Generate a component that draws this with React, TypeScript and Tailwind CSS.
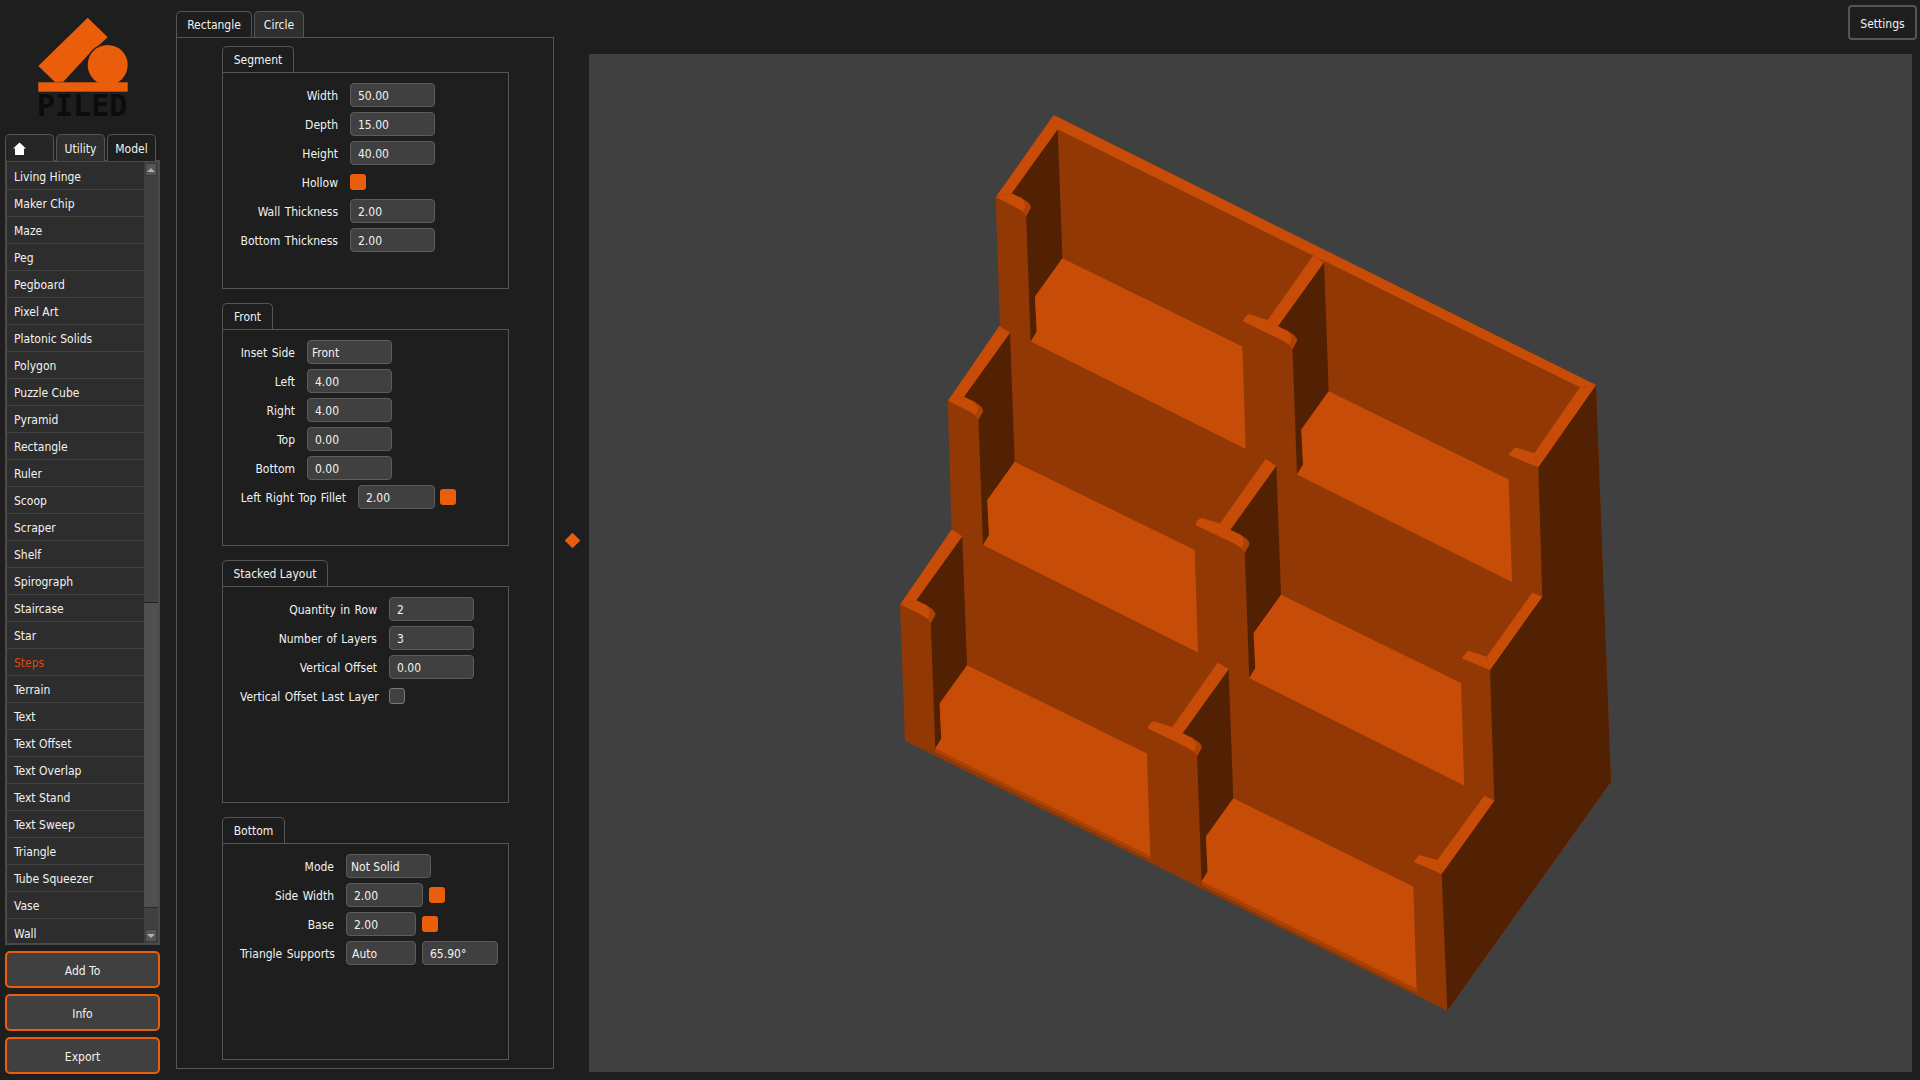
import type { ReactNode } from "react";

const modelItems = [
  "Living Hinge", "Maker Chip", "Maze", "Peg", "Pegboard", "Pixel Art", "Platonic Solids", "Polygon", "Puzzle Cube",
  "Pyramid", "Rectangle", "Ruler", "Scoop", "Scraper", "Shelf", "Spirograph", "Staircase", "Star", "Steps", "Terrain",
  "Text", "Text Offset", "Text Overlap", "Text Stand", "Text Sweep", "Triangle", "Tube Squeezer", "Vase", "Wall",
];

const FLOOR = "#c64c08";
const WALL = "#923804";
const DARK = "#522003";
const FILLET = "#ad4206";

type Pt = [number, number];

// polygon string from a cell origin plus offsets
const pts = (o: Pt, list: Pt[]) => list.map(([x, y]) => `${(o[0] + x).toFixed(1)},${(o[1] + y).toFixed(1)}`).join(" ");

function Cell({ o, col, layer }: { o: Pt; col: number; layer: number }) {
  const rimTop: Pt = col === 0 && layer === 0 ? [-4, -14.3] : [-10.7, -6.7];
  const rimOuter: Pt = col === 0 ? [-62, 68] : [-56.3, 57.7];
  const at = (x: number, y: number) => `${(o[0] + x).toFixed(1)} ${(o[1] + y).toFixed(1)}`;
  const lipStart = col === 0 ? `M${at(-62, 68)}` : `M${at(-80.7, 59.3)} Q${at(-80, 54)} ${at(-74.7, 52)} L${at(-56.3, 57.7)}`;
  return (
    <g>
      <polygon
        fill={DARK}
        points={pts(o, [[0, 0], [-46, 64], [-34.3, 70], [-26.7, 78], [-31.5, 87], [-27, 212.3], [-21, 202.3], [-22.7, 167.3], [4.7, 129]])}
      />
      <polygon
        fill={FLOOR}
        points={pts(o, [[4.7, 129], [-22.7, 167.3], [-21, 202.3], [-27, 212.3], [188, 319.7], [184.7, 217.3]])}
      />
      <polygon fill={FLOOR} points={pts(o, [[0, 0], rimTop, rimOuter, [-46, 64]])} />
      <path fill={FILLET} d={`M${at(-38, 67)} L${at(-34.3, 70)} Q${at(-28, 73)} ${at(-26.7, 78)} L${at(-31.5, 87)} L${at(-36, 81.5)} Q${at(-32, 80)} ${at(-38, 67)}Z`} />
      <path
        fill={FLOOR}
        d={`${lipStart} L${at(-46, 64)} L${at(-38, 68)} Q${at(-31, 72)} ${at(-33, 79)} L${at(-35, 82.5)} Q${at(-38, 80)} ${at(-44, 77)} Z`}
      />
    </g>
  );
}

function StepsModel() {
  const cells: { o: Pt; col: number; layer: number }[] = [];
  for (let layer = 0; layer < 3; layer++) {
    for (let col = 0; col < 2; col++) {
      cells.push({
        col,
        layer,
        o: [1057.7 + col * 266.3 - layer * 47.7, 129.3 + col * 133 + layer * 203.5],
      });
    }
  }
  return (
    <svg viewBox="589 54 1323 1018" className="w-full h-full block">
      <polygon
        fill={WALL}
        points="1053.7,115 1596,385 1611,781.7 1447.3,1010.7 905,740.7 900,605 951.7,531.7 947.7,400.7 1000,327.3 995.7,197.3"
      />
      <polygon
        fill={DARK}
        points="1596,385 1611,781.7 1447.3,1010.7 1441.7,874 1494.3,800.7 1490,670 1542.3,596.7 1538.3,467.3"
      />
      {/* base plate edge under the front floors */}
      <polygon fill="#a84205" points="935.3,748.6 1150.3,856 1150.3,859.5 935.3,752" />
      <polygon fill="#a84205" points="1201.6,881.6 1416.6,989 1416.6,992.5 1201.6,885" />
      {cells.map((c) => (
        <Cell key={`${c.layer}-${c.col}`} {...c} />
      ))}
      {/* top edge of the back wall */}
      <polygon fill={FLOOR} points="1053.7,115 1596,385 1580,387.3 1057.7,129.3" />
      {/* right hand rims */}
      <polygon fill={FLOOR} points="1596,385 1580,387.3 1534.3,453.3 1538.3,467.3" />
      <polygon fill={FLOOR} points="1508.3,455 1515,447.3 1534.3,453.3 1538.3,467.3" />
      <polygon fill={FLOOR} points="1532.3,592.7 1542.3,596.7 1490,670 1486.7,656.7" />
      <polygon fill={FLOOR} points="1461.7,658.3 1468.3,650.7 1486.7,656.7 1490,670" />
      <polygon fill={FLOOR} points="1484.3,795.7 1494.3,800.7 1441.7,874 1437.3,860" />
      <polygon fill={FLOOR} points="1413.3,861.7 1419.3,855 1437.3,860 1441.7,874" />
    </svg>
  );
}

function Logo() {
  return (
    <div className="h-[134px] relative">
      <svg viewBox="5 0 160 92" className="w-[160px] h-[92px] block">
        <polygon fill="#ea5e0b" points="87.7,17.7 107.7,37.3 88,55 63.3,81.7 55,82 38.3,66" />
        <circle cx="107.7" cy="65" r="21.5" fill="#1e1e1e" />
        <circle cx="107.7" cy="65" r="20" fill="#ea5e0b" />
        <rect x="38.3" y="82.3" width="89.4" height="9.4" fill="#ea5e0b" />
      </svg>
      <div className="absolute left-[32px] top-[89px] font-['DejaVu_Sans_Mono',monospace] font-bold text-[30px] leading-[34px] text-[#0c0c0c]">
        PILED
      </div>
    </div>
  );
}

function Tab({ children, active, className }: { children: ReactNode; active?: boolean; className: string }) {
  return (
    <div
      className={`${className} flex items-center justify-center border border-b-0 border-[#555555] rounded-t-[5px] ${
        active ? "bg-[#1e1e1e]" : "bg-[#2f2f2f]"
      }`}
    >
      {children}
    </div>
  );
}

function Sidebar() {
  return (
    <div className="w-[176px] shrink-0 pl-[5px] pr-[16px]">
      <Logo />
      <div className="flex gap-[2px] h-[27px]">
        <Tab className="w-[49px] !justify-start pl-[7px] !bg-[#262626]">
          <svg viewBox="0 0 13 13" className="w-[13px] h-[13px]">
            <path fill="#ffffff" d="M6.5 0.5 L13 6.5 H11 V13 H2 V6.5 H0 Z" />
          </svg>
        </Tab>
        <Tab className="w-[49px] pt-[2px]">Utility</Tab>
        <Tab className="w-[49px] pt-[2px]" active>
          Model
        </Tab>
      </div>
      <div className="flex h-[785px] border-2 border-[#4a4a4a] -mt-px bg-[#2d2d2d]">
        <div className="flex-1 pt-px">
          {modelItems.map((item) => (
            <div
              key={item}
              className={`h-[27px] pl-[7px] pt-[2px] flex items-center border-b border-[#444444] last:border-b-0 ${
                item === "Steps" ? "text-[#d9480f]" : ""
              }`}
            >
              {item}
            </div>
          ))}
        </div>
        <div className="w-[14px] flex flex-col bg-[#404040]">
          <div className="h-[13px] mt-px mx-px bg-[#555555] border border-[#3a3a3a] flex items-center justify-center">
            <div className="w-0 h-0 border-x-[4px] border-x-transparent border-b-[4px] border-b-[#b0b0b0]" />
          </div>
          <div className="h-[426px]" />
          <div className="h-[305px] bg-[#505050] border-t border-[#222222]" />
          <div className="flex-1 border-t border-[#2a2a2a]" />
          <div className="h-[13px] mb-px mx-px bg-[#555555] border border-[#3a3a3a] flex items-center justify-center">
            <div className="w-0 h-0 border-x-[4px] border-x-transparent border-t-[4px] border-t-[#b0b0b0]" />
          </div>
        </div>
      </div>
      <div className="mt-[6px] flex flex-col gap-[6px]">
        {["Add To", "Info", "Export"].map((label) => (
          <div
            key={label}
            className="h-[37px] pt-[2px] border-2 border-[#ea5e0b] rounded-[5px] bg-[#404040] flex items-center justify-center"
          >
            {label}
          </div>
        ))}
      </div>
    </div>
  );
}

function Field({ value, width = "w-[85px]", pad = "pl-[7px]" }: { value: string; width?: string; pad?: string }) {
  return (
    <div className={`${width} ${pad} h-[24px] pt-px bg-[#404040] border border-[#5c5c5c] rounded-[4px] flex items-center`}>
      {value}
    </div>
  );
}

function Check({ on = true }: { on?: boolean }) {
  return <div className={`w-4 h-4 rounded-[3px] ${on ? "bg-[#ea5e0b]" : "bg-[#404040] border border-[#777777]"}`} />;
}

function Row({ label, labelWidth, children }: { label: string; labelWidth: string; children: ReactNode }) {
  return (
    <div className="flex items-center gap-[12px] h-[24px]">
      <div className={`${labelWidth} pt-px text-right whitespace-nowrap [word-spacing:1px]`}>{label}</div>
      {children}
    </div>
  );
}

function Group({ title, tabWidth, children }: { title: string; tabWidth: string; children: ReactNode }) {
  return (
    <div>
      <Tab className={`${tabWidth} h-[26px]`} active>
        {title}
      </Tab>
      <div className="h-[217px] border border-[#555555] pl-[17px] pt-[10px] flex flex-col gap-[5px]">{children}</div>
    </div>
  );
}

function ParamPanel() {
  return (
    <div className="w-[378px] shrink-0 pt-[11px]">
      <div className="flex gap-[2px] h-[26px]">
        <Tab className="w-[76px]" active>
          Rectangle
        </Tab>
        <Tab className="w-[50px]">Circle</Tab>
      </div>
      <div className="h-[1032px] border border-[#555555] pl-[45px] pt-[8px] flex flex-col gap-[14px]">
        <div className="w-[287px]">
          <Group title="Segment" tabWidth="w-[72px]">
            <Row label="Width" labelWidth="w-[98px]">
              <Field value="50.00" />
            </Row>
            <Row label="Depth" labelWidth="w-[98px]">
              <Field value="15.00" />
            </Row>
            <Row label="Height" labelWidth="w-[98px]">
              <Field value="40.00" />
            </Row>
            <Row label="Hollow" labelWidth="w-[98px]">
              <Check />
            </Row>
            <Row label="Wall Thickness" labelWidth="w-[98px]">
              <Field value="2.00" />
            </Row>
            <Row label="Bottom Thickness" labelWidth="w-[98px]">
              <Field value="2.00" />
            </Row>
          </Group>
        </div>
        <div className="w-[287px]">
          <Group title="Front" tabWidth="w-[51px]">
            <Row label="Inset Side" labelWidth="w-[55px]">
              <Field value="Front" pad="pl-[4px]" />
            </Row>
            <Row label="Left" labelWidth="w-[55px]">
              <Field value="4.00" />
            </Row>
            <Row label="Right" labelWidth="w-[55px]">
              <Field value="4.00" />
            </Row>
            <Row label="Top" labelWidth="w-[55px]">
              <Field value="0.00" />
            </Row>
            <Row label="Bottom" labelWidth="w-[55px]">
              <Field value="0.00" />
            </Row>
            <Row label="Left Right Top Fillet" labelWidth="w-[106px]">
              <div className="flex items-center gap-[5px]">
                <Field value="2.00" width="w-[77px]" />
                <Check />
              </div>
            </Row>
          </Group>
        </div>
        <div className="w-[287px]">
          <Group title="Stacked Layout" tabWidth="w-[106px]">
            <Row label="Quantity in Row" labelWidth="w-[137px]">
              <Field value="2" />
            </Row>
            <Row label="Number of Layers" labelWidth="w-[137px]">
              <Field value="3" />
            </Row>
            <Row label="Vertical Offset" labelWidth="w-[137px]">
              <Field value="0.00" />
            </Row>
            <Row label="Vertical Offset Last Layer" labelWidth="w-[137px]">
              <Check on={false} />
            </Row>
          </Group>
        </div>
        <div className="w-[287px]">
          <Group title="Bottom" tabWidth="w-[63px]">
            <Row label="Mode" labelWidth="w-[94px]">
              <Field value="Not Solid" pad="pl-[4px]" />
            </Row>
            <Row label="Side Width" labelWidth="w-[94px]">
              <div className="flex items-center gap-[6px]">
                <Field value="2.00" width="w-[77px]" />
                <Check />
              </div>
            </Row>
            <Row label="Base" labelWidth="w-[94px]">
              <div className="flex items-center gap-[6px]">
                <Field value="2.00" width="w-[70px]" />
                <Check />
              </div>
            </Row>
            <Row label="Triangle Supports" labelWidth="w-[94px]">
              <div className="flex items-center gap-[6px]">
                <Field value="Auto" width="w-[70px]" pad="pl-[5px]" />
                <Field value="65.90°" width="w-[76px]" />
              </div>
            </Row>
          </Group>
        </div>
      </div>
    </div>
  );
}

export default function App() {
  return (
    <div className="w-[1920px] h-[1080px] overflow-hidden flex bg-[#1e1e1e] text-[#f2f2f2] text-[12px] font-['DejaVu_Sans_Condensed','DejaVu_Sans',sans-serif] font-stretch-condensed">
      <Sidebar />
      <ParamPanel />
      <div className="w-[35px] shrink-0 flex items-center justify-center">
        <div className="ml-[2px] w-[11px] h-[11px] bg-[#ea5e0b] rotate-45 rounded-[1px]" />
      </div>
      <div className="flex-1 flex flex-col">
        <div className="h-[54px] pt-[5px] flex justify-end pr-[3px]">
          <div className="w-[69px] h-[35px] pt-[2px] border-2 border-[#555555] rounded-[4px] flex items-center justify-center">
            Settings
          </div>
        </div>
        <div className="w-[1323px] h-[1018px] bg-[#404040]">
          <StepsModel />
        </div>
      </div>
    </div>
  );
}
